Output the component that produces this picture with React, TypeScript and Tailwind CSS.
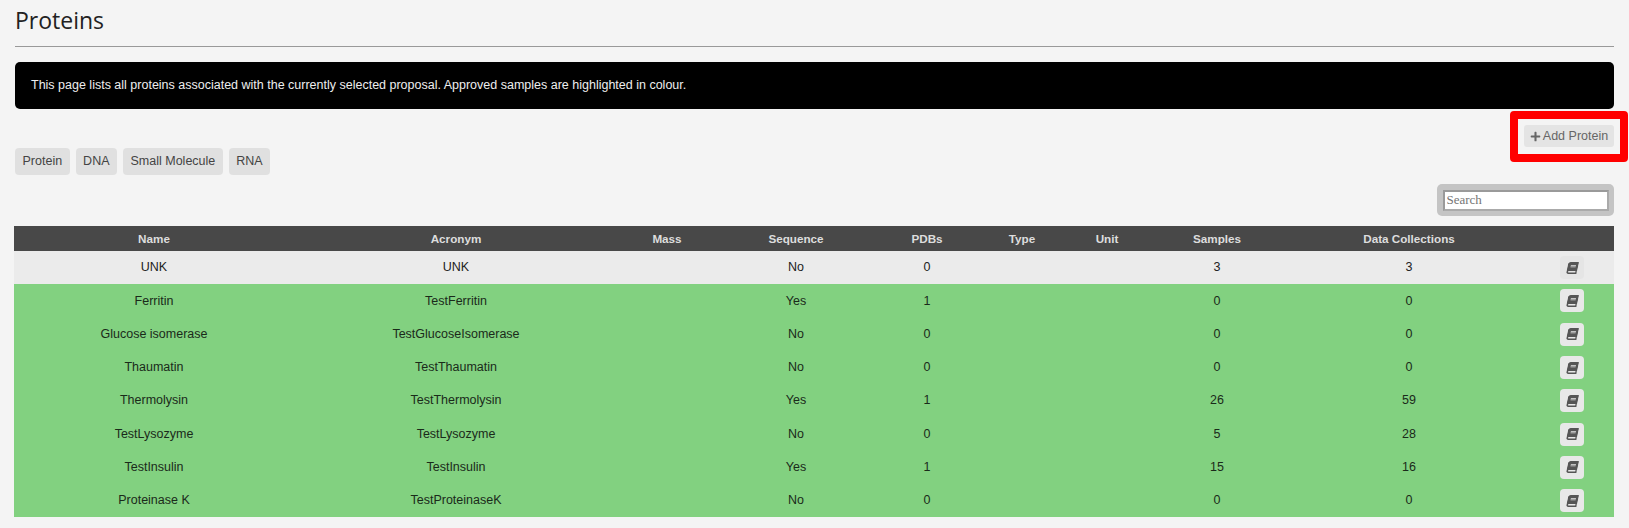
import { FaBook, FaPlus } from "react-icons/fa";

type ProteinRow = {
  name: string;
  acronym: string;
  sequence: string;
  pdbs: number;
  samples: number;
  collections: number;
  approved: boolean;
};

const rows: ProteinRow[] = [
  { name: "UNK", acronym: "UNK", sequence: "No", pdbs: 0, samples: 3, collections: 3, approved: false },
  { name: "Ferritin", acronym: "TestFerritin", sequence: "Yes", pdbs: 1, samples: 0, collections: 0, approved: true },
  { name: "Glucose isomerase", acronym: "TestGlucoseIsomerase", sequence: "No", pdbs: 0, samples: 0, collections: 0, approved: true },
  { name: "Thaumatin", acronym: "TestThaumatin", sequence: "No", pdbs: 0, samples: 0, collections: 0, approved: true },
  { name: "Thermolysin", acronym: "TestThermolysin", sequence: "Yes", pdbs: 1, samples: 26, collections: 59, approved: true },
  { name: "TestLysozyme", acronym: "TestLysozyme", sequence: "No", pdbs: 0, samples: 5, collections: 28, approved: true },
  { name: "TestInsulin", acronym: "TestInsulin", sequence: "Yes", pdbs: 1, samples: 15, collections: 16, approved: true },
  { name: "Proteinase K", acronym: "TestProteinaseK", sequence: "No", pdbs: 0, samples: 0, collections: 0, approved: true },
];

const headers = ["Name", "Acronym", "Mass", "Sequence", "PDBs", "Type", "Unit", "Samples", "Data Collections", ""];
const tabs = ["Protein", "DNA", "Small Molecule", "RNA"];

export default function App() {
  return (
    <div className="h-[528px] overflow-hidden bg-[#f4f4f4] px-[15px] font-['Liberation_Sans',Arial,sans-serif] text-[12.5px] text-[#222]">
      <h1 className="h-[47px] border-b border-[#999] pt-[4px] font-['Open_Sans',sans-serif] text-[23px] leading-[32px] font-normal text-[#222]">
        Proteins
      </h1>

      <div className="mt-[15px] flex h-[47px] items-center rounded-[5px] bg-black pl-[16px] text-[#eee]">
        This page lists all proteins associated with the currently selected proposal. Approved samples are highlighted in colour.
      </div>

      <div className="flex justify-end pt-[16px]">
        <div className="relative">
          <button className="flex h-[22px] w-[90px] items-center justify-center gap-[2px] rounded-[3px] bg-[#e4e4e4] text-[#666]">
            <FaPlus className="h-[11px] w-[11px]" />
            Add Protein
          </button>
          <div className="absolute top-[-14px] right-[-14px] h-[51px] w-[118px] rounded-[4px] border-[8px] border-[#ff0000]" />
        </div>
      </div>

      <div className="mt-[1px] flex gap-[6px]">
        {tabs.map((tab) => (
          <span key={tab} className="flex h-[27px] items-center rounded-[4px] bg-[#e0e0e0] px-[7.5px] text-[#444]">
            {tab}
          </span>
        ))}
      </div>

      <div className="flex justify-end pt-[9px]">
        <div className="flex h-[32px] w-[177px] items-center justify-center rounded-[5px] bg-[#c4c4c4]">
          <input
            placeholder="Search"
            className="h-[21px] w-[166px] border-2 border-t-[#9a9a9a] border-r-[#aaa] border-b-[#aaa] border-l-[#9a9a9a] bg-white px-[2px] font-['Liberation_Serif',serif] text-[13px] outline-none placeholder:text-[#757575]"
          />
        </div>
      </div>

      <table className="mt-[10px] -ml-px w-[1600px] table-fixed border-collapse text-center">
        <colgroup>
          <col className="w-[280px]" />
          <col className="w-[324px]" />
          <col className="w-[98px]" />
          <col className="w-[160px]" />
          <col className="w-[102px]" />
          <col className="w-[88px]" />
          <col className="w-[82px]" />
          <col className="w-[138px]" />
          <col className="w-[246px]" />
          <col className="w-[82px]" />
        </colgroup>
        <thead>
          <tr className="h-[25px] bg-[#484848] text-[#ddd]">
            {headers.map((h, i) => (
              <th key={i} className="p-0 text-[11.7px] font-bold">
                {h}
              </th>
            ))}
          </tr>
        </thead>
        <tbody>
          {rows.map((r) => (
            <tr key={r.name} className={["h-[33.3px]", r.approved ? "bg-[#82d180] text-[#1a2a1a]" : "bg-[#ebebeb] text-[#222]"].join(" ")}>
              <td className="p-0">{r.name}</td>
              <td className="p-0">{r.acronym}</td>
              <td className="p-0"></td>
              <td className="p-0">{r.sequence}</td>
              <td className="p-0">{r.pdbs}</td>
              <td className="p-0"></td>
              <td className="p-0"></td>
              <td className="p-0">{r.samples}</td>
              <td className="p-0">{r.collections}</td>
              <td className="p-0">
                <span className={["mx-auto flex h-[23px] w-[24px] -translate-x-px items-center justify-center rounded-[4px] text-[#555]", r.approved ? "bg-[#e8e8e8]" : "bg-[#e5e5e5]"].join(" ")}>
                  <FaBook className="h-[12px] w-[11px] -skew-x-12" />
                </span>
              </td>
            </tr>
          ))}
        </tbody>
      </table>
    </div>
  );
}
